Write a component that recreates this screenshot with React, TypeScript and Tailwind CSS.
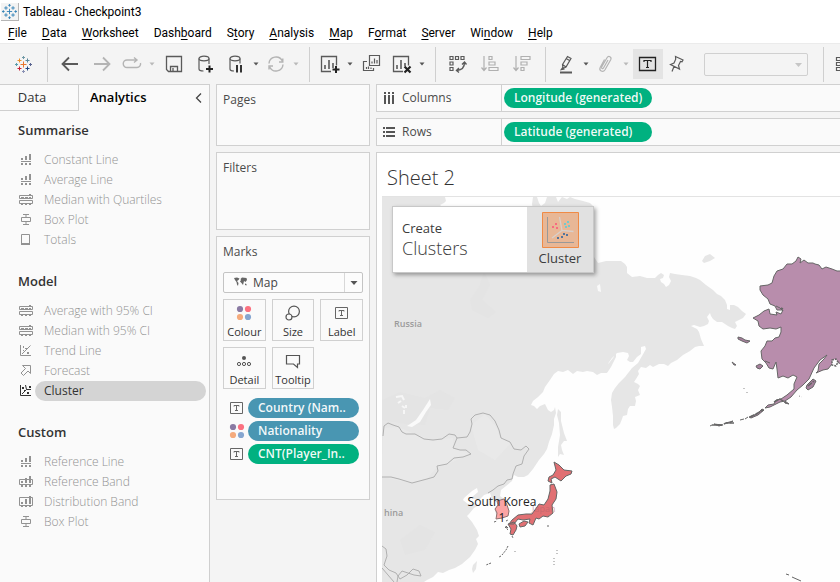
import React from "react";

/* ---------- toolbar pieces ---------- */

type IconProps = { children: React.ReactNode; className?: string };

function ToolIcon({ children, className = "text-[#5a5a5a]" }: IconProps) {
  return (
    <svg width="20" height="20" viewBox="0 0 20 20" fill="none" stroke="currentColor" strokeWidth="1.4" className={className} aria-hidden="true">
      {children}
    </svg>
  );
}

function ToolButton({ label, className = "w-8", children }: { label: string; className?: string; children: React.ReactNode }) {
  return (
    <button type="button" aria-label={label} className={`flex h-[30px] shrink-0 items-center justify-center ${className}`}>
      {children}
    </button>
  );
}

function Caret({ label, muted = false }: { label: string; muted?: boolean }) {
  return (
    <button type="button" aria-label={label} className="flex h-[30px] w-3 shrink-0 items-center justify-center">
      <svg width="6" height="4" viewBox="0 0 6 4" className={muted ? "text-[#b9b9b9]" : "text-[#555]"} aria-hidden="true">
        <path d="M0.5 0.5h5L3 3.5z" fill="currentColor" />
      </svg>
    </button>
  );
}

function Separator() {
  return <div className="mr-1.5 ml-[7px] h-[35px] w-px shrink-0 bg-[#cfcfcf]" />;
}

function TableauLogo({ mono = false, size = 17 }: { mono?: boolean; size?: number }) {
  const plus = (x: number, y: number, r: number, color: string) => (
    <path key={`${x}-${y}`} d={`M${x - r} ${y}h${2 * r}M${x} ${y - r}v${2 * r}`} stroke={mono ? "#2f7fb5" : color} strokeWidth="1" />
  );
  return (
    <svg width={size} height={size} viewBox="0 0 17 17" fill="none" aria-hidden="true">
      {plus(8.5, 8.5, 3, "#e8762d")}
      {plus(4.5, 4.5, 2, "#eb9129")}
      {plus(12.5, 4.5, 2, "#59879b")}
      {plus(4.5, 12.5, 2, "#c72035")}
      {plus(12.5, 12.5, 2, "#1f457e")}
      {plus(8.5, 1.5, 1.5, "#7099a6")}
      {plus(8.5, 15.5, 1.5, "#8a91b4")}
      {plus(1.5, 8.5, 1.5, "#5b9cab")}
      {plus(15.5, 8.5, 1.5, "#5b6591")}
    </svg>
  );
}

function Toolbar() {
  return (
    <div className="flex h-[41px] shrink-0 items-center overflow-hidden border-t border-[#ebebeb] bg-[#f4f4f4]">
      <ToolButton label="Start page" className="ml-[7px] w-[33px]">
        <TableauLogo />
      </ToolButton>
      <Separator />
      <ToolButton label="Undo">
        <ToolIcon><path d="M18 10H3M9 3.5L2.5 10L9 16.5" strokeWidth="1.8" /></ToolIcon>
      </ToolButton>
      <ToolButton label="Redo">
        <ToolIcon className="text-[#b4b4b4]"><path d="M2 10h15M11 3.5l6.500 6.500l-6.500 6.500" strokeWidth="1.8" /></ToolIcon>
      </ToolButton>
      <ToolButton label="Replay" className="w-7">
        <ToolIcon className="text-[#b4b4b4]"><path d="M14.500 6H5a3.700 3.700 0 0 0 0 7.500h10a3.700 3.700 0 0 0 3.500-4.500M12 3.500l3 2.500l-3 2.500" /></ToolIcon>
      </ToolButton>
      <Caret label="Replay speed" muted />
      <ToolButton label="Save">
        <ToolIcon><path d="M2.500 2.500h15v15h-13l-2-2zM6.500 17v-4.500h7v4.500M9 14v3.500" strokeWidth="1.3" /></ToolIcon>
      </ToolButton>
      <ToolButton label="New data source">
        <ToolIcon>
          <ellipse cx="8" cy="4.500" rx="5" ry="2.300" strokeWidth="1.200" />
          <path d="M3 4.500v10.500c0 1.200 2 2 4.500 2M13 4.500v5.500" strokeWidth="1.200" />
          <path d="M13.500 11.500v7M10 15h7" strokeWidth="2" stroke="#222" />
        </ToolIcon>
      </ToolButton>
      <ToolButton label="Pause auto updates" className="w-7">
        <ToolIcon>
          <ellipse cx="9" cy="4.500" rx="5" ry="2.300" strokeWidth="1.200" />
          <path d="M4 4.500v10.500c0 1.200 1.700 2 4 2M14 4.500v5" strokeWidth="1.200" />
          <path d="M11 11v7.500M15 11v7.500" strokeWidth="2" stroke="#333" />
        </ToolIcon>
      </ToolButton>
      <Caret label="Update options" />
      <ToolButton label="Run update" className="w-7">
        <ToolIcon className="text-[#b4b4b4]"><path d="M3 9.500a7 7 0 0 1 13.300-2.500M17 10.500a7 7 0 0 1-13.300 2.500M13 8h3.800V4.500M7 12H3v3.500" /></ToolIcon>
      </ToolButton>
      <Caret label="Run options" muted />
      <Separator />
      <ToolButton label="New worksheet" className="w-7">
        <ToolIcon>
          <path d="M11 17.500H1.500v-15h15v9" strokeWidth="1.300" />
          <path d="M5 15v-4M9 15V6M13 14V9" strokeWidth="1.600" />
          <path d="M16 12v7M12.500 15.500h7" strokeWidth="2" stroke="#222" />
        </ToolIcon>
      </ToolButton>
      <Caret label="New sheet options" />
      <ToolButton label="Duplicate">
        <ToolIcon>
          <path d="M7.500 1.500h10v10h-10zM5 7.500H1.500v9h10v-2.500" strokeWidth="1.200" />
          <path d="M10 9.500v-2M12.500 9.500V4.500M15 9.500V6M4.500 15v-2M6.500 15v-2.500M9 15v-1.500" strokeWidth="1.200" />
        </ToolIcon>
      </ToolButton>
      <ToolButton label="Clear sheet" className="w-7">
        <ToolIcon>
          <path d="M11 17.500H1.500v-15h15v9" strokeWidth="1.300" />
          <path d="M5 15v-4M9 15V6M13 12V9" strokeWidth="1.600" />
          <path d="M12.500 12.500l6 6M18.500 12.500l-6 6" strokeWidth="2.200" stroke="#222" />
        </ToolIcon>
      </ToolButton>
      <Caret label="Clear options" />
      <Separator />
      <ToolButton label="Swap rows and columns">
        <ToolIcon>
          <path d="M2 2.500h3v3H2zM7.500 2.500h3v3h-3zM13 2.500h3v3h-3zM2 8h3v3H2zM2 13.500h3v3H2z" strokeWidth="1.200" />
          <path d="M16.500 8.500c0 5-3 7.500-7.500 8M14 10.500l2.500-2.500l2 2.500M11 14l-2.500 2.500l2.500 2" />
        </ToolIcon>
      </ToolButton>
      <ToolButton label="Sort ascending">
        <ToolIcon className="text-[#b0b0b0]">
          <path d="M4 2v14M1.500 13.500L4 16.500l2.500-3M9 2.500h3v3H9zM9 8h6v3H9zM9 13.500h9v3H9z" strokeWidth="1.200" />
        </ToolIcon>
      </ToolButton>
      <ToolButton label="Sort descending">
        <ToolIcon className="text-[#b0b0b0]">
          <path d="M4 2v14M1.500 13.500L4 16.500l2.500-3M9 2.500h9v3H9zM9 8h6v3H9zM9 13.500h3v3H9z" strokeWidth="1.200" />
        </ToolIcon>
      </ToolButton>
      <Separator />
      <ToolButton label="Highlight" className="w-7">
        <ToolIcon>
          <path d="M6.500 10.500L11.500 2.500l3.500 2L10 13L7 14.500zM6.500 10.500l3.500 2.500M10.500 4.800l3.500 2" strokeWidth="1.200" />
          <path d="M5.500 15.500l1-1.500l1 1z" />
          <path d="M4 18.500h12" strokeWidth="2" />
        </ToolIcon>
      </ToolButton>
      <Caret label="Highlight options" />
      <ToolButton label="Group members" className="w-7">
        <ToolIcon className="text-[#b4b4b4]">
          <path d="M12 6l-4.500 8c-.8 1.500-2.500.4-1.800-1L11 3.800c1.600-2.600 5-.7 3.700 2L9 15.800c-2 3.300-6.500 1-4.700-2.600L8.500 5.500" strokeWidth="1.200" />
        </ToolIcon>
      </ToolButton>
      <Caret label="Group options" muted />
      <ToolButton label="Show mark labels" className="ml-px w-[30px] bg-[#e4e4e4]">
        <ToolIcon className="text-[#222]">
          <path d="M1.500 3.500h16v13h-16z" strokeWidth="1.300" />
          <path d="M6 8V6.500h7V8M9.500 6.500v7M8 13.500h3" strokeWidth="1.200" />
        </ToolIcon>
      </ToolButton>
      <ToolButton label="Fix axes" className="w-7">
        <ToolIcon>
          <path d="M8.500 2.500l7.500 3.500l-1 1.800l-1.500-.3l-2 4l1 3.500l-9-4.500l3.500-1.500l1.700-3.800zM7 12.500L5 17.500" strokeWidth="1.200" />
        </ToolIcon>
      </ToolButton>
      <div className="relative ml-[13px] w-[104px] shrink-0">
        <select aria-label="Fit" disabled className="block h-[23px] w-full appearance-none rounded-xs border border-[#d0d0d0] bg-[#f4f4f4]" />
        <svg width="7" height="4" viewBox="0 0 7 4" className="pointer-events-none absolute top-[10px] right-[6px]" aria-hidden="true">
          <path d="M0 0h7L3.500 4z" fill="#c6c6c6" />
        </svg>
      </div>
      <div className="ml-2 shrink-0"><Separator /></div>
      <ToolButton label="Show cards" className="ml-1 w-5">
        <ToolIcon><path d="M2.500 3.500h4v3h-4zM2.500 8.500h4v3h-4zM2.500 13.500h4v3h-4zM9 3.500h10v13H9z" strokeWidth="1.200" /></ToolIcon>
      </ToolButton>
    </div>
  );
}

/* ---------- menu ---------- */

const menus: [string, string, string][] = [
  ["", "F", "ile"],
  ["", "D", "ata"],
  ["", "W", "orksheet"],
  ["Dash", "b", "oard"],
  ["S", "t", "ory"],
  ["", "A", "nalysis"],
  ["", "M", "ap"],
  ["F", "o", "rmat"],
  ["", "S", "erver"],
  ["Wi", "n", "dow"],
  ["", "H", "elp"],
];

function MenuBar() {
  return (
    <nav className="flex h-[21px] shrink-0 items-center gap-[15px] pt-px pl-2 font-[Roboto,sans-serif] text-xs text-black">
      {menus.map(([a, key, b]) => (
        <button type="button" key={a + key + b}>
          {a}
          <span className="underline underline-offset-2">{key}</span>
          {b}
        </button>
      ))}
    </nav>
  );
}

/* ---------- analytics pane ---------- */

type Kind = "line" | "band" | "box" | "totals" | "trend" | "forecast" | "cluster" | "refband" | "dist";

function RowIcon({ kind }: { kind: Kind }) {
  const paths: Record<Kind, React.ReactNode> = {
    line: <path fill="currentColor" d="M3 6h2v2H3zM7 4h2v4H7zM11 2h2v6h-2zM3 9h10v1H3zM3 11h2v2H3zM7 11h2v2H7zM11 11h2v2h-2z" />,
    band: (
      <>
        <path d="M1.500 3.500h13v3h-13zM1.500 8.500h13v3h-13z" stroke="currentColor" fill="none" />
        <path fill="currentColor" d="M11 2h2v2h-2zM3 5h3v1H3zM7 5h3v1H7zM11 5h2v1h-2zM3 12h2v1H3zM7 12h2v1H7zM11 12h2v1h-2z" />
      </>
    ),
    box: <path d="M5 2.500h6M8 2.500v3M3.500 5.500h9v4h-9zM8 9.500v3M5 12.500h6" stroke="currentColor" fill="none" />,
    totals: (
      <>
        <path d="M3.500 2.500h8v10h-8z" stroke="currentColor" fill="none" />
        <path d="M3 11h9v2H3z" fill="currentColor" />
      </>
    ),
    trend: (
      <>
        <path d="M2.500 2v10.500H13M4 11l8.500-8.500" stroke="currentColor" fill="none" />
        <path d="M5 3h1v2H5zM7 5h2v1H7zM9 9h2v2H9zM5 7h1v1H5z" fill="currentColor" />
      </>
    ),
    forecast: <path d="M4.500 2.500h8v8L10 8l-4.500 4.500L3 10l4.500-4.500z" stroke="currentColor" fill="none" />,
    cluster: (
      <>
        <path d="M2.500 2v10.500H13M7.500 2l1 4.500L4 11M8.500 6.500H13" stroke="currentColor" fill="none" />
        <path d="M4 4h2v2H4zM11 3h2v2h-2zM9 9h2v2H9zM6 7h1v1H6z" fill="currentColor" />
      </>
    ),
    refband: (
      <>
        <path d="M1.500 5.500h13v5h-13z" stroke="currentColor" fill="none" />
        <path d="M3 7h2v2H3zM7 4h2v5H7zM11 2h2v7h-2zM3 11h2v2H3zM7 11h2v2H7zM11 11h2v2h-2z" fill="currentColor" />
      </>
    ),
    dist: (
      <>
        <path d="M1.500 3.500h13v8h-13z" stroke="currentColor" fill="none" />
        <path d="M3 8h2v2H3zM7 5h2v5H7zM11 2h2v8h-2zM3 12h2v1H3zM7 12h2v1H7zM11 12h2v1h-2z" fill="currentColor" />
      </>
    ),
  };
  return (
    <svg width="16" height="16" viewBox="0 0 16 16" className="shrink-0" aria-hidden="true">
      {paths[kind]}
    </svg>
  );
}

const sections: { title: string; items: [string, Kind][] }[] = [
  {
    title: "Summarise",
    items: [["Constant Line", "line"], ["Average Line", "line"], ["Median with Quartiles", "band"], ["Box Plot", "box"], ["Totals", "totals"]],
  },
  {
    title: "Model",
    items: [["Average with 95% CI", "band"], ["Median with 95% CI", "band"], ["Trend Line", "trend"], ["Forecast", "forecast"], ["Cluster", "cluster"]],
  },
  {
    title: "Custom",
    items: [["Reference Line", "line"], ["Reference Band", "refband"], ["Distribution Band", "dist"], ["Box Plot", "box"]],
  },
];

function AnalyticsPane() {
  return (
    <aside className="w-[210px] shrink-0 border-t border-r border-[#cfcfcf] bg-[#fafafa]">
      <div className="flex h-[26px] text-[13px]">
        <button type="button" className="w-[79px] border-r border-b border-[#cfcfcf] pr-3.5 text-[#333]">Data</button>
        <button type="button" className="flex-1 pl-[11px] text-left font-semibold text-black">Analytics</button>
        <button type="button" aria-label="Collapse pane" className="flex w-[22px] items-center justify-center">
          <svg width="7" height="10" viewBox="0 0 7 10" fill="none" stroke="#444" strokeWidth="1.300" aria-hidden="true">
            <path d="M6 0.500L1.500 5L6 9.500" />
          </svg>
        </button>
      </div>
      <div className="flex flex-col gap-3">
        {sections.map((s) => (
          <section key={s.title}>
            <h2 className="pb-px pl-[18px] text-[13px] leading-[38px] font-semibold text-[#333]">{s.title}</h2>
            {s.items.map(([name, kind]) => {
              const active = name === "Cluster";
              return (
                <button
                  type="button"
                  key={name}
                  className={`flex h-5 w-full items-center gap-px pr-[3px] pl-[18px] text-left text-xs font-light ${active ? "text-[#333]" : "text-[#929292]"}`}
                >
                  <RowIcon kind={kind} />
                  <span className={`flex-1 rounded-full pl-[9px] leading-5 ${active ? "bg-[#d4d4d4] font-normal" : ""}`}>{name}</span>
                </button>
              );
            })}
          </section>
        ))}
      </div>
    </aside>
  );
}

/* ---------- cards ---------- */

function Card({ title, className, children }: { title: string; className: string; children?: React.ReactNode }) {
  return (
    <section className={`border border-[#d0d0d0] bg-[#fafafa] px-1.5 ${className}`}>
      <h2 className="text-xs leading-[30px] text-[#4a4a4a]">{title}</h2>
      {children}
    </section>
  );
}

function ColourDots() {
  return (
    <svg width="16" height="16" viewBox="0 0 16 16" className="shrink-0" aria-hidden="true">
      <circle cx="4" cy="4" r="3.100" fill="#8a7aa3" />
      <circle cx="12" cy="4" r="3.100" fill="#fb7180" />
      <circle cx="4" cy="12" r="3.100" fill="#f5ab7d" />
      <circle cx="12" cy="12" r="3.100" fill="#86a6d0" />
    </svg>
  );
}

function TextMark() {
  return (
    <svg width="16" height="16" viewBox="0 0 16 16" fill="none" stroke="#666" className="shrink-0" aria-hidden="true">
      <path d="M1.500 2.500h12v11h-12z" />
      <path d="M5 6.500v-1h5v1M7.500 5.500v5M6 10.500h3" />
    </svg>
  );
}

const markButtons: [string, React.ReactNode][] = [
  ["Colour", <ColourDots />],
  ["Size", (
    <svg width="16" height="16" viewBox="0 0 16 16" fill="none" stroke="#555" strokeWidth="1.200" className="shrink-0" aria-hidden="true">
      <circle cx="9" cy="6.500" r="5.400" />
      <circle cx="4" cy="12" r="3" fill="#fafafa" />
    </svg>
  )],
  ["Label", <TextMark />],
  ["Detail", (
    <svg width="16" height="16" viewBox="0 0 16 16" fill="none" stroke="#555" className="shrink-0" aria-hidden="true">
      <circle cx="8" cy="5" r="2" fill="#555" stroke="none" />
      <circle cx="3" cy="11" r="1.600" />
      <circle cx="8" cy="11" r="1.600" />
      <circle cx="13" cy="11" r="1.600" />
    </svg>
  )],
  ["Tooltip", (
    <svg width="16" height="16" viewBox="0 0 16 16" fill="none" stroke="#555" strokeWidth="1.200" className="shrink-0" aria-hidden="true">
      <path d="M1.500 2.500h13v8.500h-2v3.500L8.500 11h-7z" />
    </svg>
  )],
];

const markPills: [string, boolean, string][] = [
  ["Country (Nam..", true, "bg-[#4996b2]"],
  ["Nationality", false, "bg-[#4996b2]"],
  ["CNT(Player_In..", true, "bg-[#00b180]"],
];

function Cards() {
  return (
    <div className="flex w-[154px] shrink-0 flex-col gap-1.5">
      <Card title="Pages" className="h-[62px]" />
      <Card title="Filters" className="h-[78px]" />
      <Card title="Marks" className="h-[264px]">
        <div className="relative mt-[5px]">
          <select aria-label="Mark type" className="block h-[21px] w-full appearance-none rounded-xs border border-[#c4c4c4] bg-white/40 pl-[29px] text-xs text-[#444]">
            <option>Map</option>
          </select>
          <svg width="13" height="10" viewBox="0 0 13 10" className="pointer-events-none absolute top-[5px] left-[11px]" aria-hidden="true">
            <path d="M0 1l3-.5l2.500 1L4.500 3L3 4l1.500 2l-.5 3L3 7.500L2.500 5L1 3zM6.500 2L8 .5l4.500.5l.5 2l-1.500 2l-1.500-1l-.5 2L9 8L7.500 6L6 4.500l1-1.500zM11 6.500l1.500.5v1.500L11 8z" fill="#666" />
          </svg>
          <div className="pointer-events-none absolute inset-y-px right-0 flex w-[19px] items-center justify-center border-l border-[#d8d8d8]">
            <svg width="8" height="4" viewBox="0 0 8 4" aria-hidden="true"><path d="M0.500 0h7L4 4z" fill="#555" /></svg>
          </div>
        </div>
        <div className="mt-1.5 grid grid-cols-3 gap-1.5">
          {markButtons.map(([label, icon]) => (
            <button type="button" key={label} className="flex h-[42px] flex-col items-center gap-0.5 border border-[#d0d0d0] pt-[5px] text-[11px] leading-[17px] text-[#333]">
              {icon}
              {label}
            </button>
          ))}
        </div>
        <div className="mt-[9px] flex flex-col gap-[3px] pr-1 pl-1.5">
          {markPills.map(([label, text, bg]) => (
            <div key={label} className="flex items-center gap-[3px]">
              {text ? <TextMark /> : <ColourDots />}
              <button type="button" className={`h-5 flex-1 rounded-full pl-2.5 text-left text-xs font-semibold whitespace-nowrap text-white/95 ${bg}`}>{label}</button>
            </div>
          ))}
        </div>
      </Card>
    </div>
  );
}

/* ---------- shelves ---------- */

function Shelf({ title, pill, icon }: { title: string; pill: string; icon: React.ReactNode }) {
  return (
    <div className="flex h-7 shrink-0 border border-r-0 border-[#d0d0d0] bg-[#fafafa]">
      <div className="flex w-[125px] items-center gap-[5px] border-r border-[#d0d0d0] pl-[5px] text-xs text-[#4a4a4a]">
        <svg width="15" height="14" viewBox="0 0 15 14" fill="#555" className="shrink-0" aria-hidden="true">{icon}</svg>
        {title}
      </div>
      <button type="button" className="mt-[3px] ml-0.5 h-5 w-[148px] rounded-full bg-[#00b180] pl-2.5 text-left text-xs font-semibold text-white/95">{pill}</button>
    </div>
  );
}

/* ---------- map ---------- */

const eurasia =
  "M382 197H445L446 201L444 203L440 205L445 209H533L532 204L533 197H537L539 203L541 206L545 203L547 197H556L558 202L562 197L567 199L570 197L575 199L583 201L590 203L594 207V257L596 260L598 263L602 262L606 261L616 261H621L625 264L627 267V273L632 277L640 276L647 278L655 278L658 275L661 273L664 275L663 278L660 279L661 282L664 284L666 287L669 285L671 281L669 277L670 273L675 274L682 275L690 276L696 278L700 280L706 285L713 290L717 294L721 296L725 300L727 305V309L730 310L730 305L734 305L738 307L742 311L746 314L743 318L739 320L735 322L737 326L735 329L732 328L728 326L722 322L717 322L713 319L711 316L710 313L707 317L709 321L708 324L704 326L700 327L694 325L691 326L697 329L699 332L701 339L704 346L699 346L695 347L690 351L683 355L677 360L671 363L668 366L664 364L659 364L653 367L650 365L646 368L641 367L638 371L639 374L636 379L634 382L638 384L640 386L638 390L640 395L635 397L636 401L635 406L630 406L628 409L627 415L623 416L622 419L620 424L616 428L614 429L613 425L613 416L612 407L611 400L612 393L615 388L619 383L625 377L632 368L638 363L642 356L646 349L645 346L641 347L641 354L637 357L633 362L630 362L627 360L629 356L628 353L623 352L617 353L612 358L607 365L606 369L608 372L600 373L606 372L604 367L609 363L613 358L616 353L616 357L611 367L607 373L601 373L597 375L593 372L587 371L583 372L577 371L573 374L568 370L563 372L558 371L554 374L550 380L545 387L543 392L538 397L533 401L531 405L534 406L537 409L540 406L545 404L548 410L551 412L554 410L555 407L556 413L554 419L554 425L552 434L549 442L547 449L544 454L539 460L533 469L528 475L524 477L518 477L514 475L512 481L506 486L501 490L500 496L504 499L508 507L509 514L501 519L497 518L495 511L498 502L492 499L490 493L484 495L479 500L474 499L472 497L478 492L477 488L472 491L464 498L463 500L468 504L474 503L479 505L474 508L469 514L467 516L472 522L477 530L479 536L476 539L478 544L475 550L470 557L462 564L455 568L449 570L443 573L438 572L433 577L427 580L424 582H382Z";

const sakhalin = "M558 409L561 412L561 421L564 433L567 441L564 441L561 445L562 450L564 455L560 454L558 457L558 447L560 435L559 423L557 415Z";

const alaska =
  "M845 271L837 271L832 269L826 267L822 269L819 265L815 264L813 263L808 263L804 260L800 263L801 259L798 257L796 261L792 264L787 264L783 269L777 271L774 276L772 283L768 285L760 286L760 290L763 295L768 299L770 304L775 306L777 310L783 310L781 314L776 312L777 315L770 314L769 309L764 311L759 315L753 318L758 321L759 326L763 329L770 328L776 329L781 327L781 332L779 337L775 338L772 341L767 341L765 346L761 351L762 359L766 363L769 368L773 369L776 362L777 369L778 378L783 376L788 378L793 375L797 377L794 384L794 389L787 395L781 399L776 400L774 404L768 405L765 408L770 407L776 404L780 402L785 401L791 397L797 390L803 385L809 379L814 368L820 360L827 355L824 359L819 364L818 371L816 373L823 370L828 369L832 364L837 362L845 366Z";

const islands =
  "M738 337L742 338L745 340L750 341L747 343L742 341L738 339ZM756 366L760 364L763 366L760 369L757 368ZM807 385L813 379L816 381L813 387L808 390L806 388ZM714 424L722 425L719 426ZM726 423L733 421L730 423ZM749 417L757 414L762 409L764 410L758 415L751 418ZM785 401L789 404L785 403ZM732 362L736 365L734 365ZM786 574L789 575M792 577L801 581";

const hokkaido = "M554 462L559 465L564 470L572 471L571 474L566 476L561 481L555 477L551 479L552 483L548 481L549 477L553 475L556 470Z";
const honshu =
  "M550 485L554 484L557 492L556 499L552 505L553 513L548 517L543 516L539 519L536 518L533 525L529 523L530 519L523 520L518 519L514 524L509 524L512 520L518 515L526 514L532 514L537 507L539 504L544 505L548 499L550 491Z";
const kyushu = "M508 524L514 522L517 526L516 530L513 535L510 534L511 529ZM519 524L524 521L528 522L525 526L520 527ZM506 526L508 528L506 527Z";
const southKorea = "M497 501L504 499L507 505L509 511L508 516L502 518L496 519L497 513L495 509L498 505Z";

const borders =
  "M383 436L384 426L388 423L393 425L399 427L402 432L406 434L415 434L424 439L433 440L442 439L449 434L455 435L457 438L467 437L470 432L472 424L471 419L475 415L483 413L490 415L495 421L499 430L501 438L510 442L514 449L521 450L526 446L529 449L524 456L522 464L516 466L513 474L512 479L507 480L504 484L498 486L493 490L488 493M457 438L453 448L460 450L466 450L471 454L463 457L454 458L447 464L437 466L438 471L434 477L427 479L412 483L399 479L391 477L382 477M382 546L386 549L387 556L384 565L389 570L396 573L400 579L407 575L413 569L419 571L421 576L414 575L408 573L402 571L398 576L397 582M382 568L388 575L394 582";

function WorldMap() {
  return (
    <svg viewBox="382 197 458 385" preserveAspectRatio="xMinYMin slice" className="absolute inset-0 h-full w-full" role="img" aria-label="Map of marks by country">
      <rect x="382" y="197" width="458" height="385" fill="#fefefe" />
      <path d={eurasia} fill="#e6e6e6" />
      <path d={sakhalin} fill="#e6e6e6" />
      <path d="M702 261L705 256L710 254L715 258L710 261L704 263ZM473 565L477 561L476 569L473 573L472 569Z" fill="#e6e6e6" />
      <path d="M383 428L398 427L415 434L433 440L453 438L454 448L470 454L448 464L437 467L427 479L411 483L382 477ZM471 425L485 414L497 428L500 438L511 443L495 460L478 450Z" fill="#e9e9e9" />
      <path d="M382 400L400 392L425 398L440 390L455 398L448 410L430 408L425 425L405 424L382 420ZM470 300L480 285L484 272L490 285L482 300L496 312L488 318L472 310ZM400 540L420 525L435 532L425 550L405 555Z" fill="#e4e4e4" />
      <path d="M430 399L431 405L426 412L420 422L412 427L407 426L416 420L423 410ZM597 286L600 284L601 292L598 291Z" fill="#fafafa" />
      <path d="M396 397l6-1 2 4M398 403l3-2M402 406l3 2M404 410v4M406 405v3" fill="none" stroke="#f6f6f6" strokeWidth="2" />
      <path d={borders} fill="none" stroke="#a9a9a9" strokeWidth="0.900" />
      <g className="fill-[#9b9b9b] font-['Open_Sans',sans-serif] text-[9px] font-semibold">
        <text x="394" y="327">Russia</text>
        <text x="384" y="516">hina</text>
      </g>
      <g stroke="#666" strokeWidth="1" strokeLinejoin="round">
        <path d={alaska} fill="#b88dac" />
        <path d={islands} fill="#a67f9c" />
        <path d="M832 360l4-1 2 3-2 4-4-1z" fill="#fefefe" strokeDasharray="2 1" strokeWidth="1.500" />
        <path d="M710 426l2-1M740 420l4-1M745 419l3-2M776 306l4 2 3 3M765 361l5 2" fill="none" />
        <path d="M712 425l10 0 4-2 8 0M750 417l6-3 7-4M774 402l6-3 6 4M808 386l6-5M781 308l2 1" fill="none" strokeWidth="1.500" strokeDasharray="5 1" />
        <path d={hokkaido + honshu + kyushu} fill="#e17073" />
        <path d={southKorea} fill="#fca4a4" stroke="#8d7070" />
        <path d="M512 536l1 2M508 546l-2 4-4 5M501 556l-2 1M491 563l-5 2M494 522l3-1M506 521l2-1M548 525v2M505 527l3 3" fill="none" strokeDasharray="2 1" />
        <path d="M557 550v4M554 558v8M515 551v1M549 515v1M744 388v1M747 392v1M799 396l3 1" fill="none" strokeDasharray="1 2" stroke="#888" />
      </g>
      <text x="532" y="512" className="fill-[#b5656a]/60 font-['Open_Sans',sans-serif] text-[9px]">Japan</text>
      <g textAnchor="middle" className="fill-[#222] font-['Open_Sans',sans-serif] text-xs">
        <text x="502" y="506">South Korea</text>
        <text x="502" y="522">1</text>
      </g>
    </svg>
  );
}

function ClusterDrop() {
  return (
    <div className="absolute top-[9px] left-2.5 flex h-[67px] w-[202px] border border-[#c8c8c8] bg-white shadow-[2px_2px_4px_rgba(0,0,0,0.35)]">
      <div className="flex-1 pt-3 pl-[9px] text-[#3c3c3c]">
        <p className="text-[13px] leading-[19px]">Create</p>
        <p className="text-lg leading-5 font-light">Clusters</p>
      </div>
      <button type="button" className="flex w-[66px] flex-col items-center bg-[#e1e1e1] pt-[5px] text-[13px] leading-5 text-[#3c3c3c]">
        <svg width="37" height="36" viewBox="0 0 37 36" className="shrink-0" aria-hidden="true">
          <path d="M0.500 0.500h36v35h-36z" fill="#e8b796" stroke="#f08a45" />
          <path d="M5.500 5v25.500H32" fill="none" stroke="#999" />
          <path d="M17.500 5l2.500 13.500l11.500 1M20 18.500L10 26" fill="none" stroke="#d8d0cc" strokeWidth="1.300" />
          <path d="M13 11h2v2h-2zM10 14h2v2h-2zM14 15h2v2h-2z" fill="#f76b80" />
          <path d="M25 9h2v2h-2zM22 11h2v2h-2zM26 13h2v2h-2zM23 14h2v2h-2z" fill="#72c9cf" />
          <path d="M21 21h2v2h-2zM24 22h2v2h-2zM19 24h2v2h-2zM15 25h2v2h-2z" fill="#54759c" />
        </svg>
        Cluster
      </button>
    </div>
  );
}

export default function App() {
  return (
    <div className="flex min-h-screen flex-col overflow-hidden bg-white font-['Open_Sans','Noto_Sans',sans-serif]">
      <header className="flex h-[22px] shrink-0 items-center gap-1 pt-px pl-px font-[Roboto,sans-serif] text-xs text-black">
        <div className="flex size-[18px] items-center justify-center border-r border-b border-[#b5b5b5] bg-[#f3f3f3]">
          <TableauLogo mono size={15} />
        </div>
        <h1>Tableau - Checkpoint3</h1>
      </header>
      <MenuBar />
      <Toolbar />
      <main className="flex flex-1 gap-1.5 bg-[#f4f4f4]">
        <AnalyticsPane />
        <Cards />
        <div className="flex min-w-0 flex-1 flex-col gap-1.5">
          <Shelf
            title="Columns"
            pill="Longitude (generated)"
            icon={<path d="M2 1h2v2H2zM2 4h2v9H2zM6 1h2v2H6zM6 4h2v9H6zM10 1h2v2h-2zM10 4h2v9h-2z" />}
          />
          <Shelf
            title="Rows"
            pill="Latitude (generated)"
            icon={<path d="M1 2h2v2H1zM4 2h9v2H4zM1 6h2v2H1zM4 6h9v2H4zM1 10h2v2H1zM4 10h9v2H4z" />}
          />
          <div className="flex flex-1 flex-col border-t border-l border-[#d0d0d0] bg-white pl-[5px]">
            <h2 className="h-[43px] pt-2.5 pl-[5px] text-xl leading-[30px] font-light text-[#333]">Sheet 2</h2>
            <div className="relative flex-1 overflow-hidden border-t border-[#e3e3e3]">
              <WorldMap />
              <ClusterDrop />
            </div>
          </div>
        </div>
      </main>
    </div>
  );
}
